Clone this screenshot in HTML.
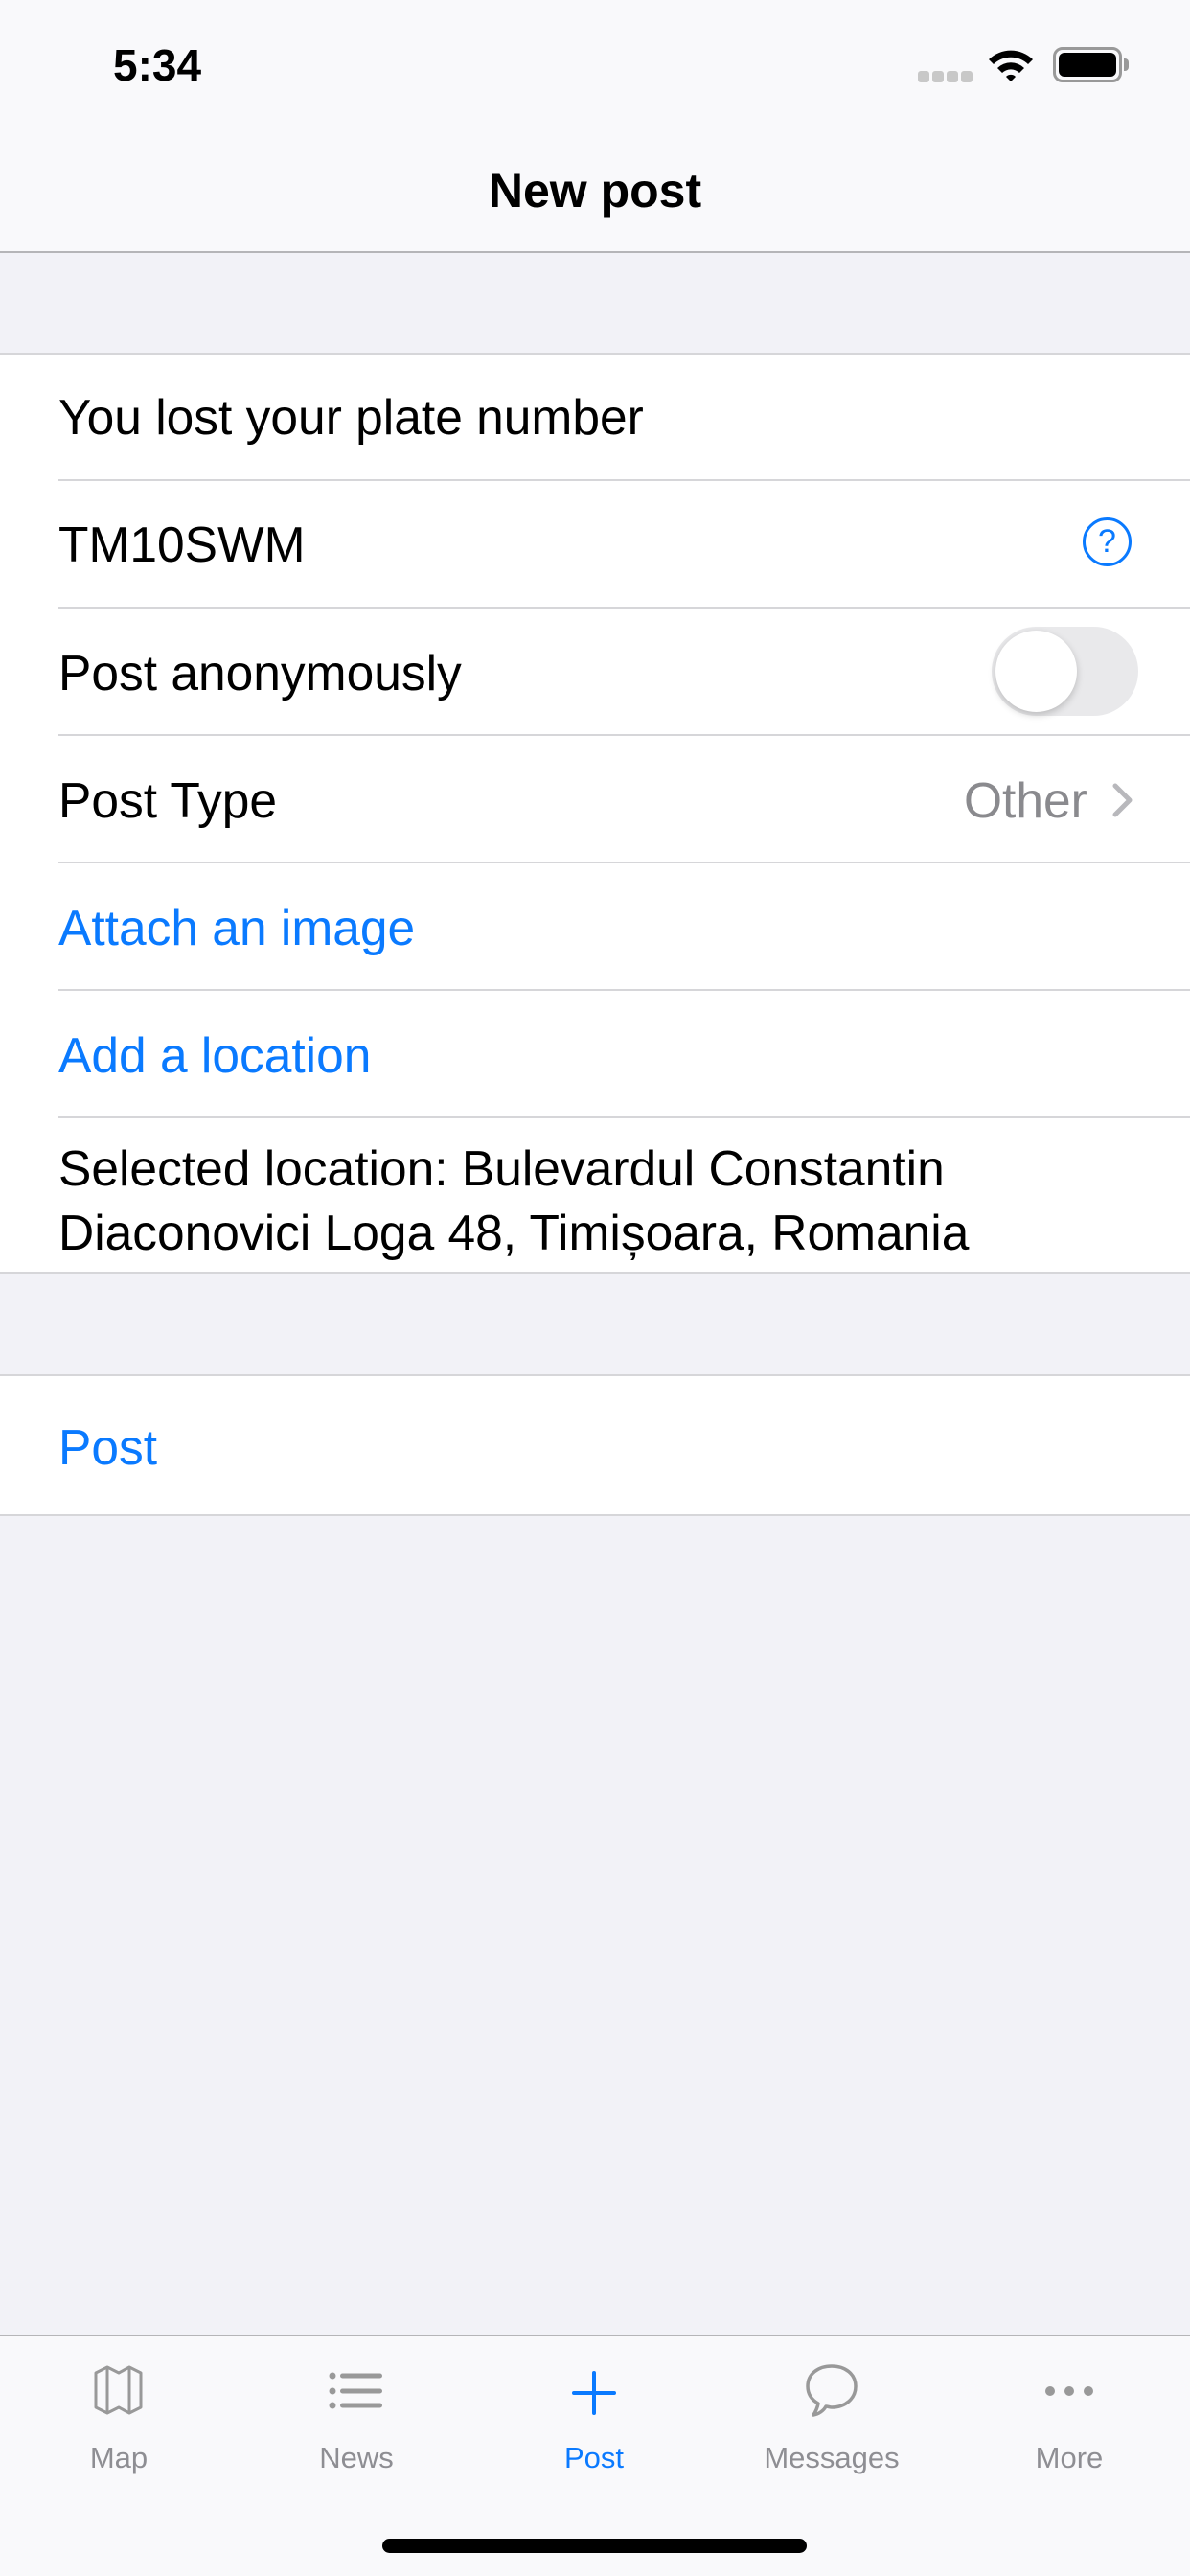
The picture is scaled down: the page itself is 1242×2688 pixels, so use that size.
<!DOCTYPE html>
<html><head><meta charset="utf-8"><style>
*{margin:0;padding:0;box-sizing:border-box}
body{width:1242px;height:2688px;background:#f2f2f7;font-family:"Liberation Sans",sans-serif;position:relative;overflow:hidden}
.abs{position:absolute}
.nav{left:0;top:0;width:1242px;height:264px;background:#f9f9fb;border-bottom:2px solid #b5b5b8}
.row{position:absolute;left:0;width:1242px;background:#fff}
.t{position:absolute;left:61px;font-size:51.5px;color:#000;white-space:nowrap}
.sep{position:absolute;left:61px;right:0;height:2px;background:#d6d6d9}
.blue{color:#0a7aff}
.tab{position:absolute;top:2547px;width:248px;text-align:center;font-size:31px;color:#8e8e93}
</style></head><body>
<div class="abs nav"></div>
<div class="abs" style="left:118px;top:41px;font-size:46px;font-weight:bold">5:34</div>
<div class="abs" style="left:958px;top:74px;width:12px;height:12px;border-radius:3px;background:#c8c8c8"></div>
<div class="abs" style="left:973px;top:74px;width:12px;height:12px;border-radius:3px;background:#c8c8c8"></div>
<div class="abs" style="left:988px;top:74px;width:12px;height:12px;border-radius:3px;background:#c8c8c8"></div>
<div class="abs" style="left:1003px;top:74px;width:12px;height:12px;border-radius:3px;background:#c8c8c8"></div>
<svg class="abs" style="left:1030px;top:48px" width="50" height="38" viewBox="0 0 50 38"><path d="M2 14 A33 33 0 0 1 48 14 L43 19 A26 26 0 0 0 7 19 Z M11 23 A20 20 0 0 1 39 23 L34 28 A13 13 0 0 0 16 28 Z M20 32 A7 7 0 0 1 30 32 L25 37 Z" fill="#000"/></svg>
<div class="abs" style="left:1099px;top:49px;width:72px;height:37px;border:3px solid #999;border-radius:10px;padding:3px"><div style="width:100%;height:100%;background:#000;border-radius:6px"></div></div>
<div class="abs" style="left:1173px;top:61px;width:5px;height:13px;background:#999;border-radius:0 4px 4px 0"></div>
<div class="abs" style="left:0;width:1242px;top:170px;text-align:center;font-size:50px;font-weight:bold">New post</div>

<div class="row" style="top:368px;height:961px;border-top:2px solid #d6d6d9;border-bottom:2px solid #d6d6d9"></div>
<div class="t" style="top:405px">You lost your plate number</div>
<div class="sep" style="top:500px"></div>
<div class="t" style="top:538px">TM10SWM</div>
<div class="abs" style="left:1130px;top:540px;width:51px;height:51px;border:3.5px solid #0a7aff;border-radius:50%;color:#0a7aff;font-size:34px;text-align:center;line-height:44px">?</div>
<div class="sep" style="top:633px"></div>
<div class="t" style="top:672px">Post anonymously</div>
<div class="abs" style="left:1035px;top:654px;width:153px;height:93px;border-radius:47px;background:#e9e9eb"></div>
<div class="abs" style="left:1039px;top:658px;width:85px;height:85px;border-radius:50%;background:#fff;box-shadow:0 3px 8px rgba(0,0,0,.2)"></div>
<div class="sep" style="top:766px"></div>
<div class="t" style="top:805px">Post Type</div>
<div class="abs" style="left:1006px;top:805px;font-size:51.5px;color:#8a8a8e">Other</div>
<svg class="abs" style="left:1160px;top:816px" width="24" height="38" viewBox="0 0 24 38"><path d="M4 4 L19 19 L4 34" stroke="#b8b8bc" stroke-width="5" fill="none" stroke-linecap="round" stroke-linejoin="round"/></svg>
<div class="sep" style="top:899px"></div>
<div class="t blue" style="top:938px">Attach an image</div>
<div class="sep" style="top:1032px"></div>
<div class="t blue" style="top:1071px">Add a location</div>
<div class="sep" style="top:1165px"></div>
<div class="t" style="top:1186px;line-height:67px">Selected location: Bulevardul Constantin<br>Diaconovici Loga 48, Timișoara, Romania</div>

<div class="row" style="top:1434px;height:148px;border-top:2px solid #d6d6d9;border-bottom:2px solid #d6d6d9"></div>
<div class="t blue" style="top:1480px">Post</div>

<div class="abs" style="left:0;top:2436px;width:1242px;height:252px;background:#f9f9fb;border-top:2px solid #b5b5b8"></div>
<svg class="abs" style="left:97px;top:2468px" width="52" height="52" viewBox="0 0 52 52"><path d="M3 8 L15 2 L27 8 L38 2 L50 8 L50 44 L38 50 L27 44 L15 50 L3 44 Z M15 2 L15 50 M38 2 L38 50" stroke="#999" stroke-width="3" fill="none" stroke-linejoin="round"/></svg>
<svg class="abs" style="left:343px;top:2475px" width="60" height="44" viewBox="0 0 60 44"><g fill="#999"><circle cx="4" cy="4" r="3.5"/><circle cx="4" cy="20" r="3.5"/><circle cx="4" cy="35" r="3.5"/><rect x="12" y="1.5" width="44" height="5" rx="2.5"/><rect x="12" y="17.5" width="44" height="5" rx="2.5"/><rect x="12" y="32.5" width="44" height="5" rx="2.5"/></g></svg>
<svg class="abs" style="left:594px;top:2474px" width="52" height="46" viewBox="0 0 52 46"><path d="M26 2 V44 M5 23 H47" stroke="#0a7aff" stroke-width="4" stroke-linecap="round"/></svg>
<svg class="abs" style="left:838px;top:2466px" width="60" height="58" viewBox="0 0 60 58"><path d="M30 3 C16 3 5 11 5 24 C5 32 9 38 16 42 C15 47 13 51 11 54 C17 53 22 49 24 45 C26 45 28 46 30 46 C44 46 55 37 55 24 C55 11 44 3 30 3 Z" stroke="#999" stroke-width="3.5" fill="none" stroke-linejoin="round"/></svg>
<svg class="abs" style="left:1090px;top:2488px" width="52" height="14" viewBox="0 0 52 14"><g fill="#999"><circle cx="6" cy="7" r="5"/><circle cx="26" cy="7" r="5"/><circle cx="46" cy="7" r="5"/></g></svg>
<div class="tab" style="left:0">Map</div>
<div class="tab" style="left:248px">News</div>
<div class="tab" style="left:496px;color:#0a7aff">Post</div>
<div class="tab" style="left:744px">Messages</div>
<div class="tab" style="left:992px">More</div>
<div class="abs" style="left:399px;top:2649px;width:443px;height:15px;border-radius:8px;background:#000"></div>
</body></html>
